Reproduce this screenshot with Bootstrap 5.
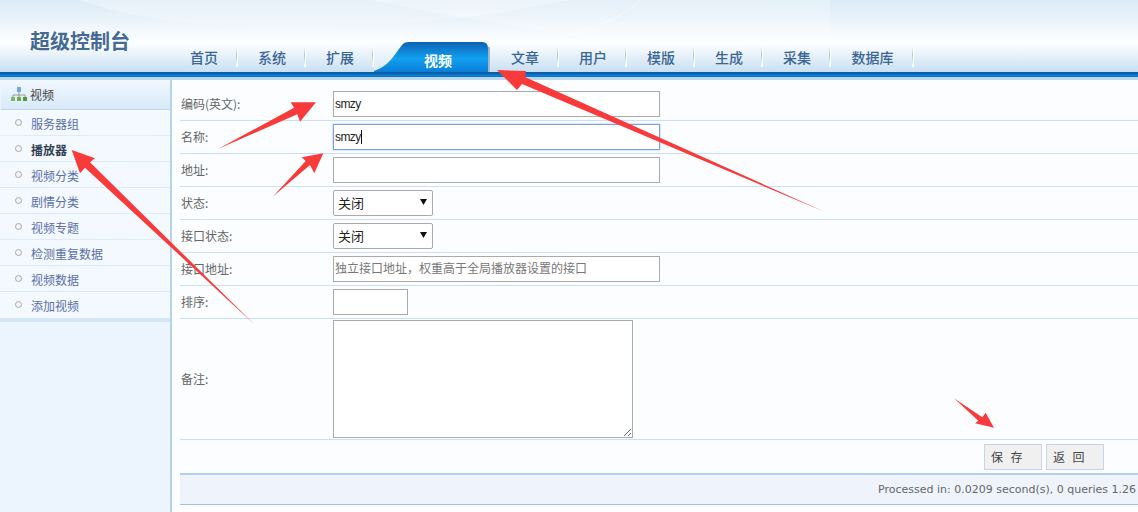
<!DOCTYPE html>
<html lang="zh">
<head>
<meta charset="utf-8">
<title>视频</title>
<link href="https://cdn.jsdelivr.net/npm/bootstrap@5.3.0/dist/css/bootstrap.min.css" rel="stylesheet">
<style>
html,body{height:100%;}
body{margin:0;width:1138px;height:512px;overflow:hidden;position:relative;background:#fbfdff;font-family:"Noto Sans CJK SC","Liberation Sans",sans-serif;font-size:12px;color:#555;}
.topbar{height:72px;position:relative;background:linear-gradient(180deg,#dcebf6 0,#e8f2fa 25%,#fdfeff 58%,#fafdff 62%,#c9dff2 100%);overflow:hidden;}
.topbar-swoosh{position:absolute;left:0;top:0;}
.brand-name{position:absolute;left:30px;top:27px;font-size:20px;font-weight:700;line-height:28px;color:#446a94;}
.tabs-row{position:absolute;left:170px;bottom:0;height:30px;}
.tab-item{width:68px;height:26px;line-height:30px;margin-bottom:4px;text-align:center;font-size:14px;font-weight:500;color:#3a6595;position:relative;}
.tab-item::after{content:"";position:absolute;right:0;top:5px;height:20px;width:2px;background:linear-gradient(180deg,rgba(150,185,215,0),#a9c6e0 40%,#fff 100%);border-right:1px solid #fff;}
.tab-wide{width:83px;}
.tab-active{width:117px;height:30px;position:relative;flex:none;}
.tab-active svg{position:absolute;left:0;top:0;}
.tab-active-label{position:absolute;left:11px;right:0;top:8px;text-align:center;color:#fff;font-size:14px;font-weight:700;line-height:20px;}
.stripe{height:8px;background:linear-gradient(180deg,#0a5fab 0,#0a5fab 25%,#0c84d8 37%,#0a70c4 62%,#bcd8ee 63%,#bcd8ee 100%);}
.layout{height:432px;}
.side{width:172px;background:#ecf4fe;border-right:2px solid #b5d3ee;flex:none;height:100%;}
.side-head{height:30px;padding-left:10px;background:linear-gradient(180deg,#f1f8fe,#d8e9f8);border-bottom:1px solid #bcd8ee;color:#444;font-size:12px;margin-left:1px;}
.side-head-icon{margin-right:3px;flex:none;}
.side-list{background:#f4f9ff;border-bottom:4px solid #d3e6f6;}
.side-link{height:26px;border-bottom:1px solid #dcebf8;padding-left:15px;color:#5a6fa5;font-size:12px;}
.side-link:last-child{border-bottom:0;}
.side-on{color:#333f55;font-weight:700;}
.side-dot{width:7px;height:7px;border:1px solid #a9a9a9;border-radius:50%;background:#f4f4f4;flex:none;margin-right:9px;margin-top:-1px;}
.side-txt{padding-top:2px;}
.main-pane{flex:1;min-width:0;padding-left:8px;}
.frow{height:33px;border-bottom:1px solid #c8e0f2;}
.frow-first{height:41px;padding-top:8px;}
.frow-tall{height:121px;}
.flabel{width:153px;flex:none;padding-left:1px;color:#666;font-size:12px;}
.finput{height:26px;width:327px;border:1px solid #aaa;background:#fff;padding:0 1px;font-size:12px;letter-spacing:-.6px;color:#222;outline:0;font-family:"Liberation Sans","Noto Sans CJK SC",sans-serif;border-radius:0;display:block;}
.finput::placeholder{color:#777;font-family:"Noto Sans CJK SC",sans-serif;opacity:1;letter-spacing:0;}
.finput-on{border-color:#7f9fdc;box-shadow:0 0 2px #9fbdf0;}
.finput-short{width:75px;}
.caret-wrap{position:relative;}
.caret-bar{position:absolute;left:28px;top:6px;width:1px;height:14px;background:#111;}
.fselect{height:26px;width:100px;border:1px solid #aaa;border-radius:2px;color:#222;padding:0 0 0 4px;font-size:13px;font-family:"Noto Sans CJK SC",sans-serif;appearance:none;-webkit-appearance:none;outline:0;background:#fff url("data:image/svg+xml,%3Csvg xmlns='http://www.w3.org/2000/svg' width='7' height='6'%3E%3Cpath d='M0 0H7L3.5 6Z' fill='%23111'/%3E%3C/svg%3E") no-repeat 86px 8px;}
.farea{width:300px;height:118px;border:1px solid #aaa;background:#fff;padding:0;border-radius:0;outline:0;display:block;}
.btns-row{height:33px;padding-right:34px;gap:4px;}
.act-btn{height:26px;width:58px;background:#f0f0f0;border:1px solid #c6d4e6;color:#444;font-size:12px;padding:0 0 0 6px;letter-spacing:7.5px;text-align:left;border-radius:0;line-height:24px;}
.foot-bar{height:32px;background:#eff4fc;border-top:2px solid #b5cfe9;border-bottom:1px solid #a9bfe4;padding:2px 2px 0 0;color:#666;font-family:"DejaVu Sans",sans-serif;font-size:11px;}
.arrows{position:absolute;left:0;top:0;pointer-events:none;}
</style>
</head>
<body>
<header class="topbar">
  <svg class="topbar-swoosh" width="1138" height="72" viewBox="0 0 1138 72">
    <path d="M80 0C160 30 300 35 440 20C500 14 540 5 570 0Z" fill="#f4f9fd" opacity=".45"/>
    <path d="M370 0C500 26 600 40 670 47L830 45V0Z" fill="#fff" opacity=".25"/>
    <path d="M640 0C620 20 590 30 540 42" fill="none" stroke="#fff" stroke-opacity=".5"/>
  </svg>
  <div class="brand-name">超级控制台</div>
  <nav class="tabs-row d-flex align-items-end">
    <div class="tab-item">首页</div>
    <div class="tab-item">系统</div>
    <div class="tab-item">扩展</div>
    <div class="tab-active">
      <svg width="117" height="30" viewBox="0 0 117 30"><defs><linearGradient id="tg" x1="0" y1="0" x2="0" y2="1"><stop offset="0" stop-color="#0c62b2"/><stop offset=".55" stop-color="#11a0f0"/><stop offset="1" stop-color="#0b7ed6"/></linearGradient></defs>
      <path d="M0 0H117V30H0Z" fill="#f4f9fd" opacity=".35"/>
      <path d="M0 29C14 25 21 12 28 3Q30 0 35 0H108Q114 0 114 6V30H0Z" fill="url(#tg)"/>
      <path d="M115 5V30" stroke="#9ab8d4" stroke-width="2"/></svg>
      <div class="tab-active-label">视频</div>
    </div>
    <div class="tab-item">文章</div>
    <div class="tab-item">用户</div>
    <div class="tab-item">模版</div>
    <div class="tab-item">生成</div>
    <div class="tab-item">采集</div>
    <div class="tab-item tab-wide">数据库</div>
  </nav>
</header>
<div class="stripe"></div>
<div class="layout d-flex">
  <aside class="side">
    <div class="side-head d-flex align-items-center">
      <svg class="side-head-icon" width="16" height="15" viewBox="0 0 16 15"><rect x="6" y="0" width="4" height="5" fill="#7aa6e0"/><path d="M8 5V8M2 10V8H14V10M8 8V10" fill="none" stroke="#999"/><rect x="0" y="10" width="4" height="4" fill="#7dbb5c"/><rect x="6" y="10" width="4" height="4" fill="#6cae4c"/><rect x="12" y="10" width="4" height="4" fill="#4d9a3a"/></svg>
      <span>视频</span>
    </div>
    <div class="side-list">
      <div class="side-link d-flex align-items-center"><i class="side-dot"></i><span class="side-txt">服务器组</span></div>
      <div class="side-link side-on d-flex align-items-center"><i class="side-dot"></i><span class="side-txt">播放器</span></div>
      <div class="side-link d-flex align-items-center"><i class="side-dot"></i><span class="side-txt">视频分类</span></div>
      <div class="side-link d-flex align-items-center"><i class="side-dot"></i><span class="side-txt">剧情分类</span></div>
      <div class="side-link d-flex align-items-center"><i class="side-dot"></i><span class="side-txt">视频专题</span></div>
      <div class="side-link d-flex align-items-center"><i class="side-dot"></i><span class="side-txt">检测重复数据</span></div>
      <div class="side-link d-flex align-items-center"><i class="side-dot"></i><span class="side-txt">视频数据</span></div>
      <div class="side-link d-flex align-items-center"><i class="side-dot"></i><span class="side-txt">添加视频</span></div>
    </div>
  </aside>
  <main class="main-pane">
    <form>
      <div class="frow frow-first d-flex align-items-center"><label class="flabel">编码(英文):</label><input class="finput" value="smzy"></div>
      <div class="frow d-flex align-items-center"><label class="flabel">名称:</label><div class="caret-wrap"><input class="finput finput-on" value="smzy"><span class="caret-bar"></span></div></div>
      <div class="frow d-flex align-items-center"><label class="flabel">地址:</label><input class="finput"></div>
      <div class="frow d-flex align-items-center"><label class="flabel">状态:</label><select class="fselect"><option>关闭</option><option>开启</option></select></div>
      <div class="frow d-flex align-items-center"><label class="flabel">接口状态:</label><select class="fselect"><option>关闭</option><option>开启</option></select></div>
      <div class="frow d-flex align-items-center"><label class="flabel">接口地址:</label><input class="finput" placeholder="独立接口地址，权重高于全局播放器设置的接口"></div>
      <div class="frow d-flex align-items-center"><label class="flabel">排序:</label><input class="finput finput-short"></div>
      <div class="frow frow-tall d-flex align-items-center"><label class="flabel">备注:</label><textarea class="farea"></textarea></div>
      <div class="btns-row d-flex align-items-center justify-content-end"><button type="button" class="act-btn">保存</button><button type="button" class="act-btn">返回</button></div>
    </form>
    <div class="foot-bar d-flex align-items-center justify-content-end">Processed in: 0.0209 second(s), 0 queries 1.26</div>
  </main>
</div>
<svg class="arrows" width="1138" height="512" viewBox="0 0 1138 512">
  <g fill="#f93a3a">
    <path d="M218 149L294 107.7L290.7 102.3L316 102.3L300 121.7L297.3 114.3Z"/>
    <path d="M272.7 196.7L305.7 161L301.7 157.3L323.3 153.3L314.3 173.3L310 165Z"/>
    <path d="M825 212L525 77L526 71L497 70L517 90L522 84Z"/>
    <path d="M255 325L90 162.3L95 158.3L71.7 150L80 173.3L85 167.7Z"/>
    <path d="M954 398.3L982.3 417.3L985.7 412.7L994 427.7L975 423.3L978.3 420.7Z"/>
  </g>
</svg>
<script src="https://cdn.jsdelivr.net/npm/bootstrap@5.3.0/dist/js/bootstrap.bundle.min.js"></script>
</body>
</html>
